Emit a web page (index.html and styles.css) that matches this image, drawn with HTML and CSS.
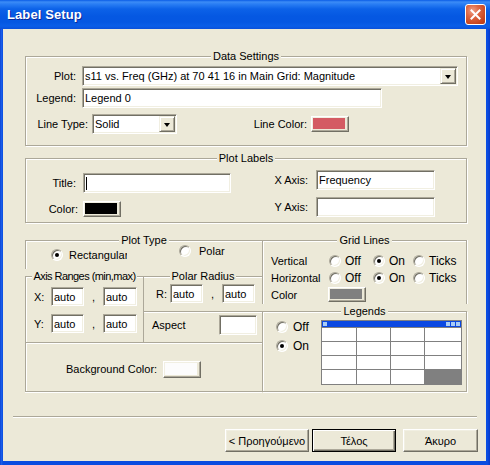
FILE: index.html
```html
<!DOCTYPE html>
<html>
<head>
<meta charset="utf-8">
<link rel="stylesheet" href="styles.css">
</head>
<body>
<div class="window">
  <div class="titlebar">
    <span class="title">Label Setup</span>
    <span class="close"><svg width="13" height="13" viewBox="0 0 13 13"><path d="M2.5 2.5L10.5 10.5M10.5 2.5L2.5 10.5" stroke="#fff" stroke-width="2" stroke-linecap="square"/></svg></span>
  </div>
  <div class="client">
    <fieldset class="group data">
      <legend>Data Settings</legend>
      <div class="row r-plot">
        <span class="lbl lw-plot">Plot:</span>
        <div class="field select sel-plot"><span class="val">s11 vs. Freq (GHz) at 70 41 16 in Main Grid: Magnitude</span><span class="drop"><span class="tri"></span></span></div>
      </div>
      <div class="row r-legend">
        <span class="lbl lw-plot">Legend:</span>
        <div class="field inp-legend"><span class="val">Legend 0</span></div>
      </div>
      <div class="row r-ltype">
        <span class="lbl lw-ltype">Line Type:</span>
        <div class="field select sel-ltype"><span class="val">Solid</span><span class="drop"><span class="tri"></span></span></div>
        <span class="lbl lw-lcolor">Line Color:</span>
        <span class="cbtn"><span class="swatch sw-red"></span></span>
      </div>
    </fieldset>

    <fieldset class="group labels">
      <legend>Plot Labels</legend>
      <div class="labels-body">
        <div class="lcol">
          <div class="row"><span class="lbl lw-title">Title:</span><div class="field inp-title"><span class="caret"></span></div></div>
          <div class="row r-color"><span class="lbl lw-color">Color:</span><span class="cbtn"><span class="swatch sw-black"></span></span></div>
        </div>
        <div class="rcol">
          <div class="row"><span class="lbl lw-axis">X Axis:</span><div class="field inp-axis"><span class="val">Frequency</span></div></div>
          <div class="row r-yaxis"><span class="lbl lw-axis">Y Axis:</span><div class="field inp-axis"></div></div>
        </div>
      </div>
    </fieldset>

    <div class="lower">
      <div class="lower-left">
        <fieldset class="sub ptype">
          <legend>Plot Type</legend>
          <div class="ptype-body">
            <span class="ropt r-rect"><span class="radio on"></span><span class="rtext clip">Rectangular</span></span>
            <span class="ropt r-polar"><span class="radio"></span><span class="rtext">Polar</span></span>
          </div>
        </fieldset>
        <div class="mid">
          <fieldset class="sub axis">
            <legend class="tight">Axis Ranges (min,max)</legend>
            <div class="row ar ar-x"><span class="lw-xy">X:</span><div class="field sm w33"><span class="val">auto</span></div><span class="comma">,</span><div class="field sm w34"><span class="val">auto</span></div></div>
            <div class="row ar ar-y"><span class="lw-xy">Y:</span><div class="field sm w33"><span class="val">auto</span></div><span class="comma">,</span><div class="field sm w34"><span class="val">auto</span></div></div>
          </fieldset>
          <div class="midright">
            <fieldset class="sub polar">
              <legend>Polar Radius</legend>
              <div class="row pr-r"><span class="lw-r">R:</span><div class="field sm w33"><span class="val">auto</span></div><span class="comma">,</span><div class="field sm w33"><span class="val">auto</span></div></div>
            </fieldset>
            <div class="aspect">
              <span class="lw-asp">Aspect</span><div class="field asp-in"></div>
            </div>
          </div>
        </div>
        <div class="bgbox">
          <span class="lw-bg">Background Color:</span>
          <span class="cbtn bgbtn"><span class="swatch sw-white"></span></span>
        </div>
      </div>
      <div class="lower-right">
        <fieldset class="sub gridlines">
          <legend>Grid Lines</legend>
          <div class="grid-body">
            <div class="grow"><span class="glabel">Vertical</span>
              <span class="gopt g-off"><span class="radio"></span>Off</span>
              <span class="gopt g-on"><span class="radio on"></span>On</span>
              <span class="gopt"><span class="radio"></span>Ticks</span>
            </div>
            <div class="grow"><span class="glabel">Horizontal</span>
              <span class="gopt g-off"><span class="radio"></span>Off</span>
              <span class="gopt g-on"><span class="radio on"></span>On</span>
              <span class="gopt"><span class="radio"></span>Ticks</span>
            </div>
            <div class="grow"><span class="glabel">Color</span>
              <span class="cbtn gbtn"><span class="swatch sw-gray"></span></span>
            </div>
          </div>
        </fieldset>
        <fieldset class="sub legends">
          <legend>Legends</legend>
          <div class="leg-body">
            <div class="leg-radios">
              <span class="lopt"><span class="radio"></span>Off</span>
              <span class="lopt"><span class="radio on"></span>On</span>
            </div>
            <div class="leg-grid">
              <div class="lg-bar"><span class="sq"></span><span class="sqs"><span class="sq"></span><span class="sq"></span><span class="sq"></span></span></div>
              <div class="lg-cells">
                <span></span><span></span><span></span><span></span>
                <span></span><span></span><span></span><span></span>
                <span></span><span></span><span></span><span></span>
                <span></span><span></span><span></span><span class="dark"></span>
              </div>
            </div>
          </div>
        </fieldset>
      </div>
    </div>

    <div class="sep"></div>
    <div class="buttons">
      <span class="btn b-prev">&lt; Προηγούμενο</span>
      <span class="btn def b-fin">Τέλος</span>
      <span class="btn b-cancel">Άκυρο</span>
    </div>
  </div>
</div>
</body>
</html>
```

FILE: styles.css
```css
* { box-sizing: border-box; }
body {
  margin: 0;
  background: #fff;
  font-family: "Liberation Sans", Arial, sans-serif;
  font-size: 11px;
  color: #000;
}
.window {
  width: 490px;
  height: 465px;
  background: linear-gradient(to right, #0836C8 0, #1E62EC 1px, #0A4CE0 3px, #0A4CE0 486px, #0B50E6 487px, #0838C8 490px);
  display: flex;
  flex-direction: column;
}
.titlebar {
  height: 29px;
  flex: none;
  display: flex;
  align-items: center;
  justify-content: space-between;
  padding: 0 4px 0 7px;
  background: linear-gradient(to bottom, #0A5CE6 0, #3C8CF6 2px, #2A7EF4 4px, #0C62E8 9px, #0558E2 16px, #0557E2 22px, #0A5EE8 26px, #0A50DA 29px);
}
.title {
  color: #fff;
  font-weight: bold;
  font-size: 13px;
  text-shadow: 1px 1px 0 #0A2A9A;
  letter-spacing: 0.1px;
}
.close {
  width: 21px;
  height: 21px;
  border: 1px solid #fff;
  border-radius: 3px;
  background: radial-gradient(circle at 35% 30%, #F0A088 0, #DE6844 35%, #C8451E 75%, #B23A16 100%);
  display: flex;
  align-items: center;
  justify-content: center;
}
.client {
  flex: none;
  margin: 0 4px 0 3px;
  height: 432px;
  background: #ECE9D8;
  padding-top: 20px;
  display: flex;
  flex-direction: column;
}

/* group boxes */
.group {
  margin: 0 0 0 22px;
  width: 442px;
  padding: 0;
  min-inline-size: 0;
  border: 1px solid #ACA899;
  box-shadow: inset 1px 1px 0 #fff, 1px 1px 0 #fff;
}
legend {
  margin: 0 auto;
  padding: 0 2px;
  line-height: 14px;
  height: 14px;
  background: #ECE9D8;
  white-space: nowrap;
}
legend.tight { letter-spacing: -0.55px; padding: 0 1px; }

.row { display: flex; align-items: center; }
.lbl { flex: none; text-align: right; white-space: nowrap; }

/* fields */
.field {
  flex: none;
  height: 20px;
  background: #fff;
  border: 1px solid;
  border-color: #ACA899 #fff #fff #ACA899;
  box-shadow: inset 1px 1px 0 #716F64, inset -1px -1px 0 #F1EFE2;
  display: flex;
  align-items: center;
  padding: 0 2px 0 2px;
  white-space: nowrap;
  overflow: hidden;
}
.select { padding-right: 1px; }
.select .val { flex: 1; overflow: hidden; }
.drop {
  flex: none;
  width: 16px;
  height: 16px;
  background: #ECE9D8;
  border: 1px solid;
  border-color: #F1EFE2 #716F64 #716F64 #F1EFE2;
  box-shadow: inset 1px 1px 0 #fff, inset -1px -1px 0 #ACA899;
  display: flex;
  align-items: center;
  justify-content: center;
}
.tri {
  width: 0;
  height: 0;
  border-left: 3.5px solid transparent;
  border-right: 3.5px solid transparent;
  border-top: 4px solid #000;
  margin-top: 1px;
}
.caret { width: 1px; height: 13px; background: #000; margin-left: 0; }

/* colour buttons */
.cbtn {
  flex: none;
  width: 38px;
  height: 16px;
  background: #ECE9D8;
  border: 1px solid;
  border-color: #fff #716F64 #716F64 #fff;
  box-shadow: inset -1px -1px 0 #ACA899, inset 1px 1px 0 #F1EFE2;
  padding: 1px 3px 2px 1px;
  display: flex;
}
.swatch { flex: 1; }
.sw-red { background: #D45B63; }
.sw-black { background: #000; }
.sw-white { background: #FCFCFC; }
.sw-gray { background: #808080; }

/* data settings */
.data > .row:first-of-type { margin-top: 3px; }
.data { padding-bottom: 11px; }
.lw-plot { width: 50px; margin-right: 6px; }
.sel-plot { width: 376px; }
.r-legend { margin-top: 2px; }
.inp-legend { width: 300px; }
.r-ltype { margin-top: 6px; }
.lw-ltype { width: 62px; margin-right: 4px; }
.sel-ltype { width: 85px; }
.lw-lcolor { width: 130px; margin-right: 4px; }

/* plot labels */
.labels { margin-top: 5px; }
.labels-body { display: flex; padding-bottom: 5px; }
.lcol { width: 205px; padding-top: 8px; }
.lw-title { width: 50px; margin-right: 7px; }
.inp-title { width: 148px; padding-left: 2px; }
.r-color { margin-top: 8px; }
.lw-color { width: 52px; margin-right: 5px; }
.rcol { padding-top: 5px; }
.lw-axis { width: 77px; margin-right: 8px; }
.inp-axis { width: 119px; }
.r-yaxis { margin-top: 7px; }

/* lower area */
.lower { display: flex; margin: 10px 0 0 22px; width: 442px; }
.lower-left { width: 237px; flex: none; }
.lower-right { width: 205px; flex: none; }
.sub {
  margin: 0;
  padding: 0;
  min-inline-size: 0;
  border: 0 solid #ACA899;
}
.ptype {
  height: 36px;
  border-top-width: 1px;
  border-left-width: 1px;
  box-shadow: inset 1px 1px 0 #fff;
}
.ptype-body { display: flex; align-items: flex-start; height: 22px; }
.ropt { display: flex; align-items: center; white-space: nowrap; }
.r-rect { margin-left: 25px; margin-top: 2px; }
.r-rect .rtext { margin-left: 6px; width: 58px; overflow: hidden; }
.r-polar { margin-left: 52px; margin-top: -2px; }
.r-polar .rtext { margin-left: 8px; }

.radio {
  flex: none;
  width: 12px;
  height: 12px;
  border-radius: 50%;
  background: #fff;
  border: 1px solid;
  border-color: #ACA899 #fff #fff #ACA899;
  box-shadow: inset 1px 1px 0 #716F64, inset -1px -1px 0 #F1EFE2;
  display: flex;
  align-items: center;
  justify-content: center;
}
.radio.on::after {
  content: "";
  width: 4px;
  height: 4px;
  border-radius: 50%;
  background: #000;
}

.mid { display: flex; height: 73px; }
.axis {
  width: 119px;
  flex: none;
  border-top-width: 1px;
  border-left-width: 1px;
  border-right-width: 1px;
  box-shadow: inset 1px 1px 0 #fff;
}
.ar { padding-left: 8px; height: 19px; }
.ar-x { margin-top: 4px; }
.ar-y { margin-top: 8px; }
.lw-xy { width: 17px; flex: none; }
.field.sm { height: 19px; }
.w33 { width: 33px; }
.w34 { width: 34px; }
.comma { width: 19px; flex: none; text-align: center; }
.midright { width: 118px; flex: none; }
.polar { height: 42px; border-top-width: 1px; box-shadow: inset 0 1px 0 #fff; }
.pr-r { margin-top: 1px; padding-left: 12px; height: 19px; }
.lw-r { width: 14px; flex: none; }
.aspect {
  height: 31px;
  border-top: 1px solid #ACA899;
  box-shadow: inset 0 1px 0 #fff;
  padding: 3px 0 0 8px;
  display: flex;
  align-items: flex-start;
}
.lw-asp { width: 67px; line-height: 20px; flex: none; }
.asp-in { width: 38px; }
.bgbox {
  height: 50px;
  border-top: 1px solid #ACA899;
  border-left: 1px solid #ACA899;
  border-bottom: 1px solid #ACA899;
  box-shadow: inset 1px 1px 0 #fff, 0 1px 0 #fff;
  padding: 18px 0 0 40px;
  display: flex;
  align-items: flex-start;
}
.lw-bg { width: 97px; line-height: 17px; flex: none; }
.bgbtn { height: 17px; }

.gridlines {
  height: 71px;
  border-top-width: 1px;
  border-left-width: 1px;
  border-right-width: 1px;
  box-shadow: inset 1px 1px 0 #fff, 1px 0 0 #fff;
}
.grid-body { padding-top: 5px; }
.grow { display: flex; align-items: center; height: 17px; padding-left: 8px; }
.glabel { width: 58px; flex: none; }
.gopt { display: flex; align-items: center; gap: 4px; font-size: 12px; flex: none; }
.g-off { width: 44px; }
.g-on { width: 40px; }
.gbtn { height: 15px; margin-left: -1px; }

.legends {
  height: 88px;
  border-width: 1px;
  box-shadow: inset 1px 1px 0 #fff, 1px 1px 0 #fff;
}
.leg-body { display: flex; }
.leg-radios {
  width: 58px;
  flex: none;
  padding: 3px 0 0 13px;
  display: flex;
  flex-direction: column;
  gap: 7px;
}
.lopt { display: flex; align-items: center; gap: 5px; height: 12px; font-size: 12px; }
.leg-grid {
  margin-top: 2px;
  width: 141px;
  height: 65px;
  border: 1px solid #808080;
  display: flex;
  flex-direction: column;
}
.lg-bar {
  height: 6px;
  flex: none;
  background: #0A48E2;
  display: flex;
  align-items: center;
  justify-content: space-between;
  padding: 0 1px;
}
.sq { width: 4px; height: 4px; background: #A8CCF6; display: block; }
.sqs { display: flex; gap: 1px; }
.lg-cells {
  flex: 1;
  display: grid;
  grid-template-columns: 34px 33px 33px 1fr;
  grid-template-rows: 13px 13px 13px 1fr;
  gap: 1px;
  background: #808080;
  padding-top: 1px;
}
.lg-cells span { background: #fff; }
.lg-cells span.dark { background: #808080; }

.sep {
  margin: 24px 0 0 10px;
  width: 464px;
  height: 2px;
  border-top: 1px solid #ACA899;
  border-bottom: 1px solid #fff;
}
.buttons {
  display: flex;
  justify-content: flex-end;
  margin-top: 11px;
  padding-right: 8px;
}
.btn {
  height: 23px;
  background: #ECE9D8;
  border: 1px solid;
  border-color: #fff #716F64 #716F64 #fff;
  box-shadow: inset -1px -1px 0 #ACA899, inset 1px 1px 0 #F1EFE2;
  display: flex;
  align-items: center;
  justify-content: center;
  white-space: nowrap;
}
.btn.def {
  border-color: #000;
  box-shadow: inset 1px 1px 0 #fff, inset -1px -1px 0 #716F64, inset -2px -2px 0 #ACA899;
}
.b-prev { width: 84px; margin-right: 3px; }
.b-fin { width: 84px; margin-right: 7px; }
.b-cancel { width: 75px; }
```
